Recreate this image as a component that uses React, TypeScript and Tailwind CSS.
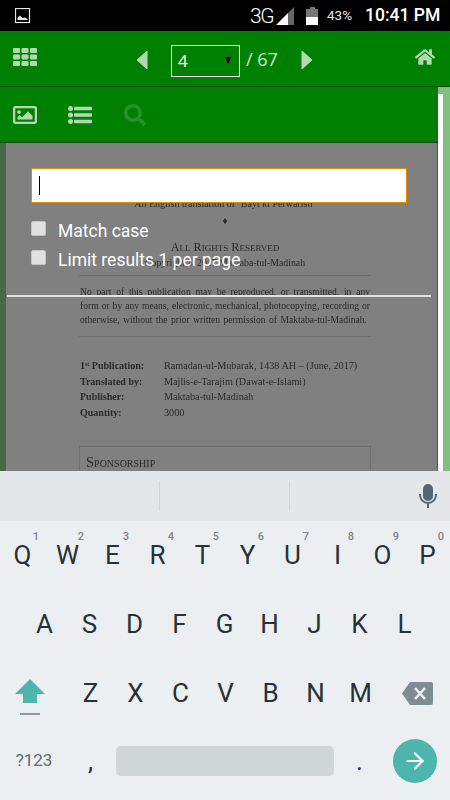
import React from 'react';
import { FaHome, FaRegImage, FaSearch } from 'react-icons/fa';
import { ArrowRight } from 'lucide-react';

const rows = [
  { keys: ['Q', 'W', 'E', 'R', 'T', 'Y', 'U', 'I', 'O', 'P'], hints: ['1', '2', '3', '4', '5', '6', '7', '8', '9', '0'] },
  { keys: ['A', 'S', 'D', 'F', 'G', 'H', 'J', 'K', 'L'], hints: [] },
];

const credits = [
  ['Translated by:', 'Majlis-e-Tarajim (Dawat-e-Islami)'],
  ['Publisher:', 'Maktaba-tul-Madinah'],
  ['Quantity:', '3000'],
];

const Key: React.FC<{ label: string; hint?: string }> = ({ label, hint }) => (
  <div className="relative w-[45px] h-[69px] flex items-center justify-center text-[26px] text-[#263238]">
    {label}
    {hint && <span className="absolute top-[10px] right-[6px] text-[11px] font-medium leading-none text-[#7b878d]">{hint}</span>}
  </div>
);

const GridIcon = () => (
  <svg width="24" height="18" viewBox="0 0 24 18" fill="#b3d9b3" className="ml-[13px] -mt-[4px]">
    {[0, 6.5, 13].map(y =>
      [0, 8.5, 17].map(x => <rect key={`${x}-${y}`} x={x} y={y} width="7" height="5" rx="1" />)
    )}
  </svg>
);

const ListIcon = () => (
  <svg width="24" height="18" viewBox="0 0 24 18" fill="#b3d9b3" className="ml-[31px]">
    {[2.5, 9, 15.5].map(y => (
      <g key={y}>
        <circle cx="2.5" cy={y} r="2.5" />
        <rect x="6" y={y - 1.8} width="18" height="3.6" rx="0.8" />
      </g>
    ))}
  </svg>
);

const StatusBar = () => (
  <div className="h-[31px] shrink-0 bg-black flex items-center text-white font-['Roboto',sans-serif]">
    <svg width="16" height="16" viewBox="0 0 16 16" className="ml-[15px]">
      <rect x="0.5" y="0.5" width="14" height="14" fill="none" stroke="#e8e8e8" strokeWidth="1.2" />
      <path d="M2.5 12 L2.5 9.5 L5 7.5 L7.5 10 L10 9.5 L12.5 11 L12.5 12 Z" fill="#e8e8e8" />
    </svg>
    <span className="ml-[219px] mt-[1px] text-[21px] font-light tracking-[-1.5px] leading-none">3G</span>
    <svg width="18" height="18" viewBox="0 0 18 18" className="ml-[3px]">
      <path d="M0 18 L12 6 L12 18 Z" fill="#fff" />
      <path d="M12 6 L18 0 L18 18 L12 18 Z" fill="#666" />
    </svg>
    <svg width="13" height="18" viewBox="0 0 13 18" className="ml-[12px]">
      <path d="M4 0 H9 V2 H12 V18 H0 V2 H4 Z" fill="#777" />
      <rect x="0" y="10" width="12" height="8" fill="#fff" />
    </svg>
    <span className="ml-[8px] text-[13.5px] leading-none text-[#e4e4e4]">43%</span>
    <span className="ml-[13px] text-[17.5px] font-medium leading-none">10:41 PM</span>
  </div>
);

const NavBar = () => (
  <div className="h-[56px] shrink-0 bg-[#008000] border-b border-[#004d00] flex items-center text-[#b3d9b3] relative">
    <GridIcon />
    <svg width="12" height="20" viewBox="0 0 12 20" className="ml-[99px] mt-[2px]">
      <path d="M11 1 L1 10 L11 19 Z" fill="#b3d9b3" stroke="#b3d9b3" strokeLinejoin="round" />
    </svg>
    <div className="ml-[23px] mt-[4px] w-[69px] h-[32px] border border-white flex items-center justify-between pl-[6px] pr-[8px] font-['Open_Sans',sans-serif] text-white text-[17px]">
      4
      <span className="w-0 h-0 border-x-[3.5px] border-x-transparent border-t-[7px] border-t-black"></span>
    </div>
    <span className="ml-[6px] mt-[2px] font-['Open_Sans',sans-serif] text-[18px] text-[#cce6cc]">/ 67</span>
    <svg width="12" height="20" viewBox="0 0 12 20" className="ml-[23px] mt-[2px]">
      <path d="M1 1 L11 10 L1 19 Z" fill="#b3d9b3" stroke="#b3d9b3" strokeLinejoin="round" />
    </svg>
    <FaHome className="ml-auto mr-[15px] -mt-[4px] w-[20px] h-[20px]" />
  </div>
);

const Document = () => (
  <div className="h-full overflow-hidden pl-[73px] pt-[55px] font-['Liberation_Serif',serif] text-[10px] text-[#2a2a2a] blur-[0.3px] whitespace-nowrap">
    <div className="w-[292px]">
      <div className="text-center leading-[12px]">An English translation of ‘Bayt ki Perwarish’</div>
      <div className="text-center leading-[12px] mt-[5px]">♦</div>
      <div className="text-center leading-[14px] mt-[13px] text-[12.2px] [font-variant-caps:small-caps]">All Rights Reserved</div>
      <div className="text-center leading-[12px] mt-[3px] text-[9.8px]">Copyright © 2017 Maktaba-tul-Madinah</div>
      <div className="border-t border-[#6e6e6e] mt-[6px]"></div>
      <div className="mt-[9px] px-px leading-[14px] text-[9.6px]">
        <div className="[text-align-last:justify]">No part of this publication may be reproduced, or transmitted, in any</div>
        <div className="[text-align-last:justify]">form or by any means, electronic, mechanical, photocopying, recording or</div>
        <div className="[text-align-last:justify] pr-[3px]">otherwise, without the prior written permission of Maktaba-tul-Madinah.</div>
      </div>
      <div className="border-t border-[#6e6e6e] mt-[9px]"></div>
      <div className="mt-[23px] px-px flex flex-col gap-[3.6px] leading-[12px]">
        <div className="flex">
          <span className="w-[84px] font-bold">1<sup className="text-[6px]">st</sup> Publication:</span>
          <span className="text-[10.2px]">Ramadan-ul-Mubarak, 1438 AH – (June, 2017)</span>
        </div>
        {credits.map(([label, value]) => (
          <div key={label} className="flex">
            <span className="w-[84px] font-bold">{label}</span>
            <span className="text-[10.2px]">{value}</span>
          </div>
        ))}
      </div>
      <div className="mt-[27px] h-[60px] border border-[#6e6e6e] pl-[6px] pt-[8px] text-[14.5px] leading-[14px] [font-variant-caps:small-caps]">Sponsorship</div>
    </div>
  </div>
);

const SearchOverlay = () => (
  <div className="absolute left-[31px] top-[25px] w-[376px] font-['Roboto',sans-serif] text-white text-[17.5px]">
    <div className="h-[35px] bg-white border-[1.5px] border-[#e08c00] flex items-center pl-[7px]">
      <div className="w-px h-[19px] bg-black"></div>
    </div>
    <div className="mt-[18px] flex items-center h-[15px] gap-[12px]">
      <div className="w-[15px] h-[15px] rounded-[2px] bg-[#e0e0e0] border border-[#c4c4c4]"></div>
      <span className="leading-none mt-[6px]">Match case</span>
    </div>
    <div className="mt-[14px] flex items-center h-[15px] gap-[12px]">
      <div className="w-[15px] h-[15px] rounded-[2px] bg-[#e0e0e0] border border-[#c4c4c4]"></div>
      <span className="leading-none mt-[6px]">Limit results 1 per page</span>
    </div>
  </div>
);

const Keyboard = () => (
  <div className="h-[329px] shrink-0 bg-[#eceff1] font-['Roboto',sans-serif]">
    <div className="h-[50px] bg-[#e3e7ea] flex items-center relative">
      <div className="ml-[159px] w-px h-[30px] bg-[#cfd4d7]"></div>
      <div className="ml-[129px] w-px h-[30px] bg-[#cfd4d7]"></div>
      <svg width="18" height="24" viewBox="0 0 18 24" className="ml-[129px]">
        <rect x="4" y="0" width="10" height="17" rx="5" fill="#566670" />
        <path d="M1 10 V11 a8 8 0 0 0 16 0 V10" fill="none" stroke="#566670" strokeWidth="2" />
        <rect x="8" y="18" width="2" height="6" fill="#566670" />
      </svg>
    </div>
    <div className="flex">
      {rows[0].keys.map((k, i) => <Key key={k} label={k} hint={rows[0].hints[i]} />)}
    </div>
    <div className="flex pl-[22px]">
      {rows[1].keys.map(k => <Key key={k} label={k} />)}
    </div>
    <div className="flex items-center">
      <div className="w-[68px] h-[69px] flex flex-col items-center justify-center">
        <svg width="30" height="24" viewBox="0 0 30 24" className="-ml-[9px] mt-[6px]">
          <path d="M15 0 L30 15 L22 15 L22 24 L8 24 L8 15 L0 15 Z" fill="#4db6ac" />
        </svg>
        <div className="-ml-[9px] mt-[10px] w-[20px] h-[2px] bg-[#8e999f]"></div>
      </div>
      {['Z', 'X', 'C', 'V', 'B', 'N', 'M'].map(k => <Key key={k} label={k} />)}
      <svg width="31" height="23" viewBox="0 0 31 23" className="ml-[19px]">
        <path d="M8 0 H29 a2 2 0 0 1 2 2 V21 a2 2 0 0 1 -2 2 H8 L0 11.5 Z" fill="#7f8d93" />
        <path d="M13 6 L23 17 M23 6 L13 17" stroke="#eceff1" strokeWidth="2.6" />
      </svg>
    </div>
    <div className="flex items-center h-[54px] mt-[6px]">
      <div className="w-[68px] text-center text-[17px] text-[#5d6b72]">?123</div>
      <div className="w-[45px] text-center text-[26px] text-[#263238]">,</div>
      <div className="ml-[3px] w-[218px] h-[30px] rounded-[5px] bg-[#d1d6d9]"></div>
      <div className="ml-[3px] w-[45px] text-center text-[26px] text-[#263238]">.</div>
      <div className="ml-[11px] w-[44px] h-[44px] rounded-full bg-[#4db6ac] flex items-center justify-center">
        <ArrowRight size={26} className="text-white" strokeWidth={2} />
      </div>
    </div>
  </div>
);

export default function App() {
  return (
    <div className="w-[450px] h-[800px] overflow-hidden flex flex-col">
      <StatusBar />
      <NavBar />
      <div className="flex-1 flex min-h-0">
        <div className="w-[438px] flex flex-col min-h-0">
          <div className="h-[56px] shrink-0 bg-[#008000] border-b border-[#004d00] flex items-center text-[#b3d9b3]">
            <FaRegImage className="ml-[13px] w-[24px] h-[24px]" />
            <ListIcon />
            <FaSearch className="ml-[32px] w-[22px] h-[22px] text-[#2a8f2a]" />
          </div>
          <div className="flex-1 flex relative min-h-0">
            <div className="w-[6px] bg-[#466a46]"></div>
            <div className="flex-1 min-h-0 bg-[#808080] border-r border-[#505050]">
              <Document />
            </div>
            <SearchOverlay />
            <div className="absolute left-[7px] top-[152px] w-[424px] h-[2px] bg-[#e2e2e2]"></div>
          </div>
        </div>
        <div className="flex-1 flex bg-[#80bf80]">
          <div className="mt-[7px] w-[5px] bg-white"></div>
        </div>
      </div>
      <Keyboard />
    </div>
  );
}
